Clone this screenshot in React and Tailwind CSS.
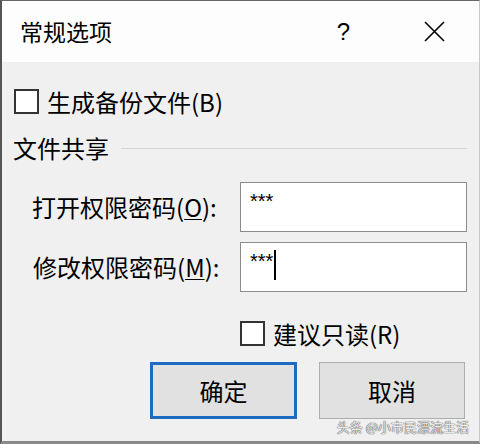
import React from "react";

const cjk = { fontFamily: '"Noto Sans CJK SC", "Noto Sans", sans-serif' };

function Box() {
  return <div className="w-[25px] h-[25px] border-2 border-[#333] bg-white shrink-0" />;
}

export default function App() {
  return (
    <div
      className="relative w-[480px] h-[444px] overflow-hidden bg-[#f0f0f0] border-l-2 border-t border-b-[3px] border-r border-l-[#555] border-t-[#666] border-b-[#8a8a8a] border-r-[#c8c8c8] text-black"
      style={cjk}
    >
      <div className="h-[61px] bg-[#fdfdfd] flex items-center pl-[18px] pr-[34px]">
        <div className="text-[23px] leading-none">常规选项</div>
        <div className="ml-auto text-[24px] leading-none mr-[74px]" style={{ fontFamily: '"Liberation Sans", sans-serif' }}>?</div>
        <svg width="21" height="21" viewBox="0 0 21 21" className="text-black">
          <path d="M1 1 L20 20 M20 1 L1 20" stroke="currentColor" strokeWidth="1.6" />
        </svg>
      </div>

      <div className="flex items-center mt-[27px] pl-[12px] h-[25px]">
        <Box />
        <span className="ml-[8px] text-[24px] leading-none">生成备份文件(B)</span>
      </div>

      <div className="flex items-center mt-[21px] pl-[11px] h-[26px]">
        <span className="text-[24px] leading-none">文件共享</span>
        <div className="ml-[12px] flex-1 h-px bg-[#d4d4d4] mr-[12px]" />
      </div>

      <div className="flex items-center mt-[21px] pl-[30px] h-[50px]">
        <span className="w-[208px] text-[24px] leading-none">打开权限密码(<span className="underline decoration-1 underline-offset-2">O</span>):</span>
        <div className="w-[227px] h-[50px] bg-white border border-[#8c8c8c] pl-[9px] pt-[8px] text-[20px] leading-none" style={{ fontFamily: '"Liberation Sans", sans-serif' }}>***</div>
      </div>

      <div className="flex items-center mt-[10px] pl-[31px] h-[50px]">
        <span className="w-[207px] text-[24px] leading-none">修改权限密码(<span className="underline decoration-1 underline-offset-2">M</span>):</span>
        <div className="w-[227px] h-[50px] bg-white border border-[#8c8c8c] pl-[9px] pt-[8px] flex items-start" style={{ fontFamily: '"Liberation Sans", sans-serif' }}>
          <span className="text-[20px] leading-none">***</span>
          <span className="w-[2px] h-[30px] bg-black ml-[1px] -mt-[1px]" />
        </div>
      </div>

      <div className="flex items-center mt-[29px] pl-[238px] h-[25px]">
        <Box />
        <span className="ml-[8px] text-[24px] leading-none">建议只读(R)</span>
      </div>

      <div className="flex mt-[16px] pl-[148px] gap-[22px]">
        <button className="w-[147px] h-[57px] bg-[#e1e1e1] border-[3px] border-[#1c6cc4] text-[24px] leading-none" style={cjk}>确定</button>
        <button className="w-[146px] h-[57px] bg-[#e1e1e1] border border-[#adadad] text-[24px] leading-none" style={cjk}>取消</button>
      </div>

      <div
        className="absolute right-[10px] bottom-[8px] text-[13px] leading-none text-[#e8e8e8]"
        style={{ ...cjk, textShadow: "0 0 1px #444, 0 0 1px #444" }}
      >
        头条 @小市民漂流生活
      </div>
    </div>
  );
}
